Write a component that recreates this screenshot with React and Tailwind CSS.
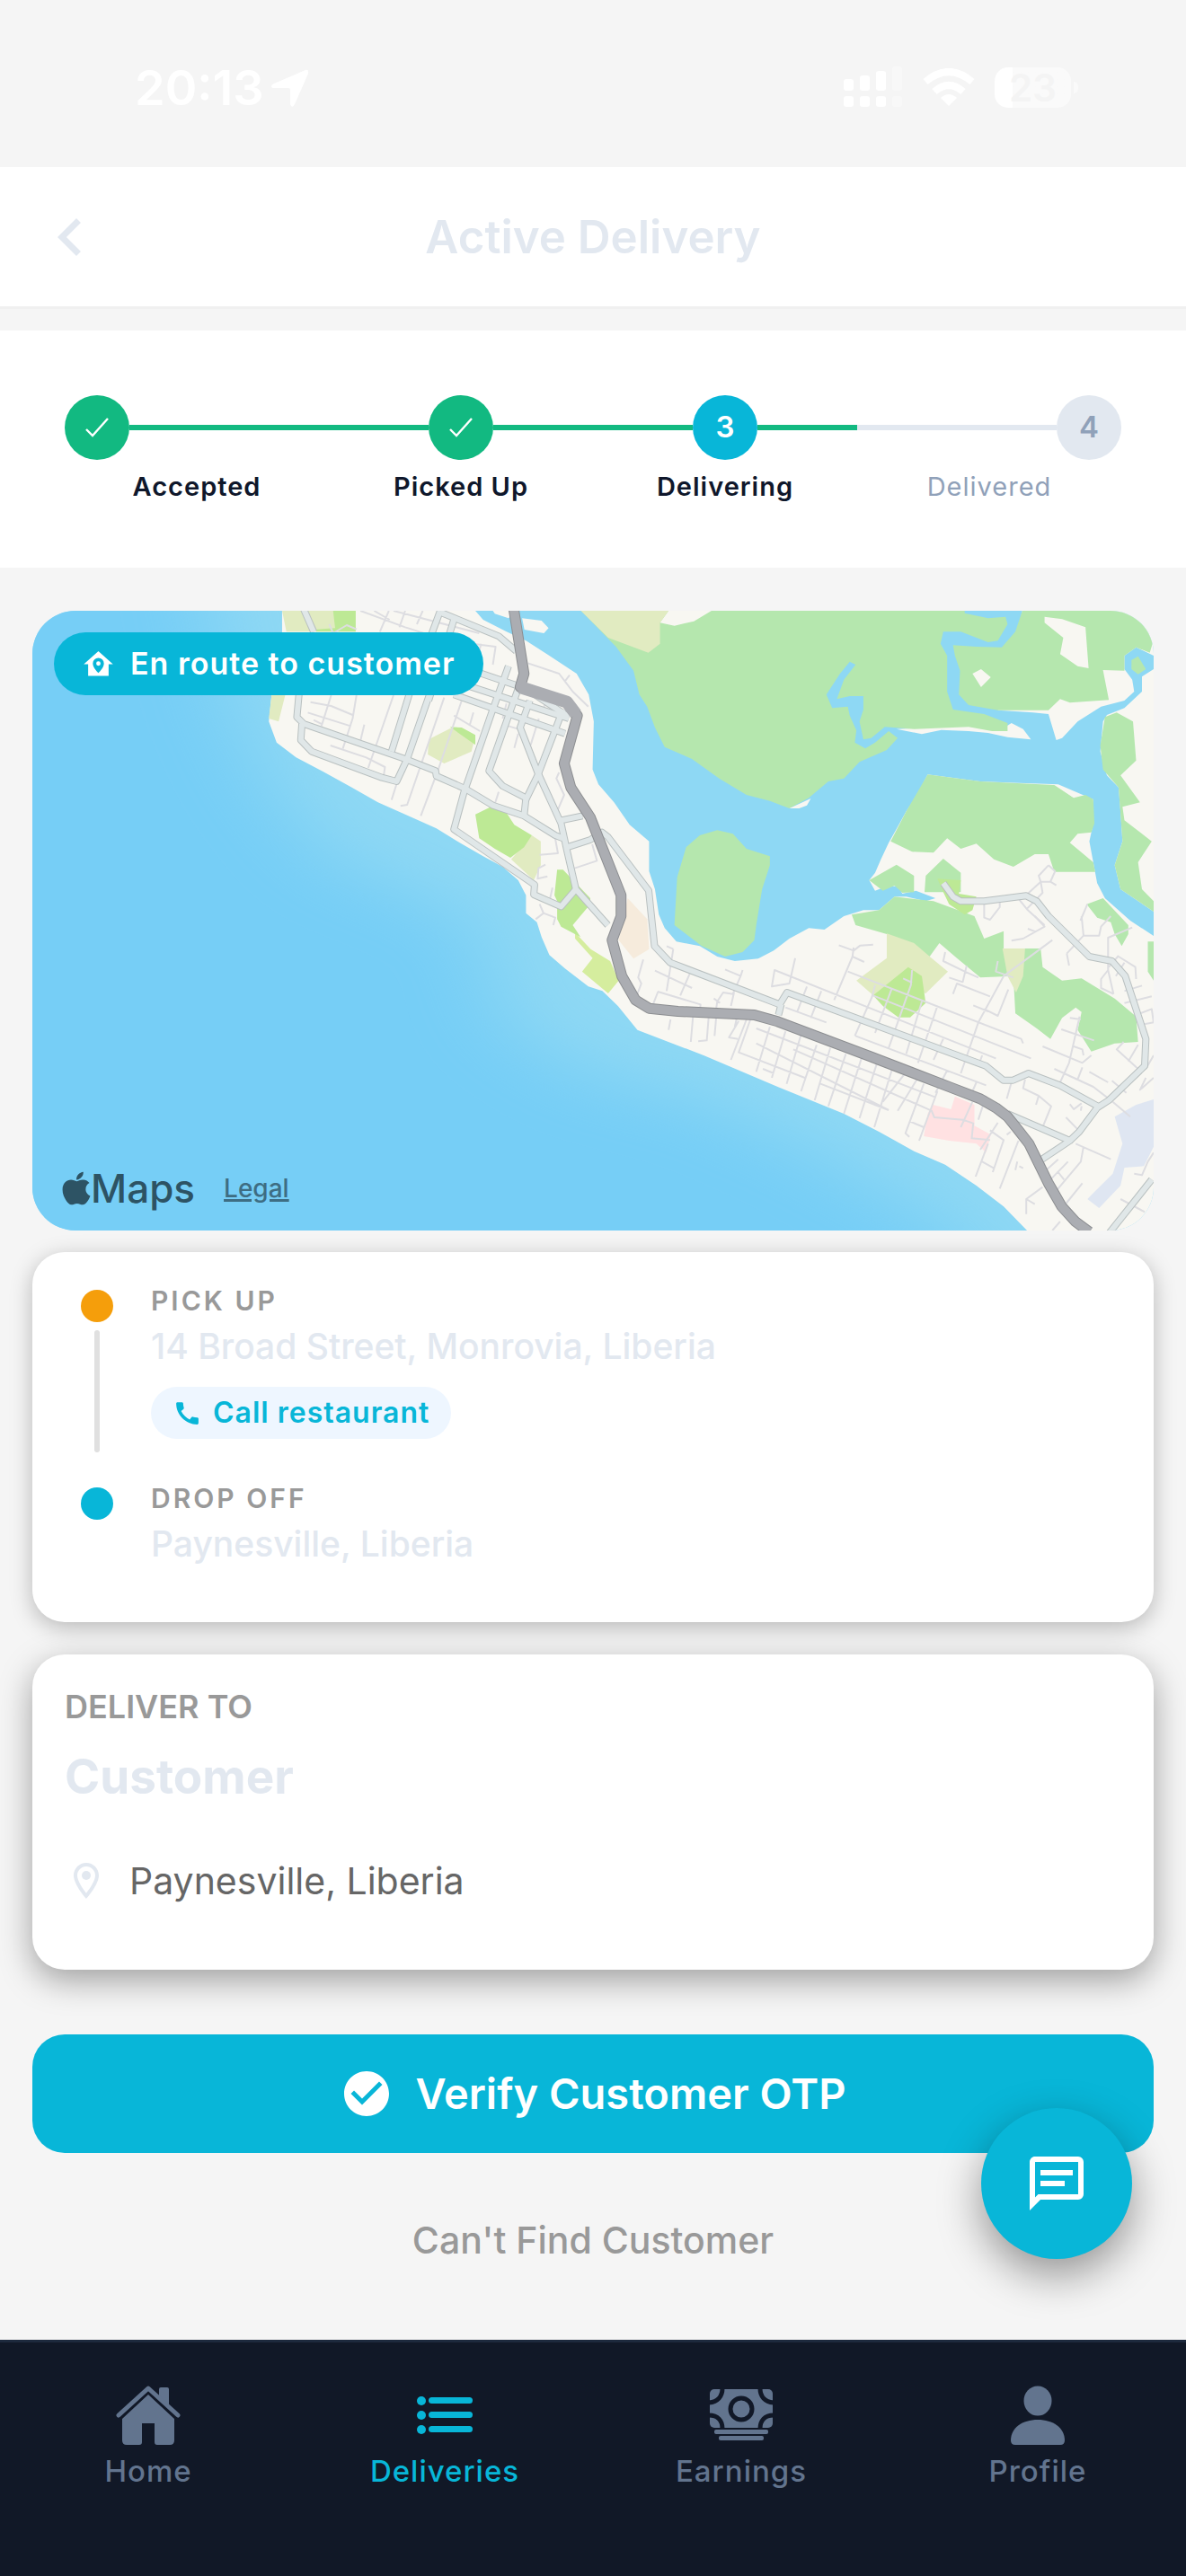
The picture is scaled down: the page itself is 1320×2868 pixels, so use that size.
import { FaApple } from "react-icons/fa";
import { MdCall, MdCheckCircle } from "react-icons/md";

const STEPS = [
    { id: 1, label: "Accepted", state: "done" },
    { id: 2, label: "Picked Up", state: "done" },
    { id: 3, label: "Delivering", state: "current" },
    { id: 4, label: "Delivered", state: "todo" },
];

const TABS = [
    { id: "home", label: "Home", Icon: HomeIcon },
    { id: "deliveries", label: "Deliveries", Icon: ListIcon },
    { id: "earnings", label: "Earnings", Icon: BanknoteIcon },
    { id: "profile", label: "Profile", Icon: PersonIcon },
];

function HomeIcon() {
    return (
        <svg viewBox="0 0 72 66" className="h-[66px] w-[72px]" fill="currentColor" aria-hidden="true">
            <path d="M48 9V4q0-2 2-2h7q2 0 2 2v20L48 12Z" />
            <path d="M3 33 36 3l33 30" fill="none" stroke="currentColor" strokeWidth="5" strokeLinecap="round" strokeLinejoin="round" />
            <path d="m36 10 29 27v24q0 5-5 5H46q-3 0-3-3V42H29v21q0 3-3 3H12q-5 0-5-5V37Z" />
        </svg>
    );
}

function ListIcon() {
    return (
        <svg viewBox="0 0 72 66" className="h-[66px] w-[72px]" fill="currentColor" aria-hidden="true">
            {[17, 33, 49].map((y) => (
                <g key={y}>
                    <circle cx="10" cy={y} r="5" />
                    <rect x="18" y={y - 4} width="49" height="7" rx="3.5" />
                </g>
            ))}
        </svg>
    );
}

function BanknoteIcon() {
    return (
        <svg viewBox="0 0 72 66" className="h-[66px] w-[72px]" fill="currentColor" aria-hidden="true">
            <rect x="1" y="4" width="70" height="43" rx="5" />
            <g fill="none" stroke="#111827" strokeWidth="5">
                <circle cx="36" cy="26" r="12" />
                <path d="M15 3c0 9-5 15-15 16M57 3c0 9 5 15 15 16M15 48c0-9-5-15-15-15M57 48c0-9 5-15 15-15" />
            </g>
            <rect x="6" y="49" width="60" height="5" rx="2" />
            <rect x="11" y="56" width="50" height="5" rx="2" />
        </svg>
    );
}

function PersonIcon() {
    return (
        <svg viewBox="0 0 72 66" className="h-[66px] w-[72px]" fill="currentColor" aria-hidden="true">
            <ellipse cx="36" cy="17" rx="15.5" ry="16.5" />
            <path d="M6 61C6 47 19 38 36 38s30 9 30 23q0 5-5 5H11q-5 0-5-5Z" />
        </svg>
    );
}

function StatusBar() {
    return (
        <div className="flex h-[186px] items-start justify-between pt-[66px] pr-[120px] pl-[150px] text-white">
            <div className="flex items-center gap-2">
                <span className="text-[54px] leading-[64px] font-semibold">20:13</span>
                <svg viewBox="0 0 42 42" className="size-[42px]" fill="currentColor" aria-hidden="true">
                    <path d="M38 1q4-1 3 4L26 39q-2 4-4 2-1-1-1-3V23q0-2-2-2H3q-3 0-3-2t3-3Z" />
                </svg>
            </div>
            <div className="flex items-center gap-[22px] pt-2">
                <svg viewBox="0 0 66 46" className="h-[46px] w-[66px]" fill="currentColor" aria-hidden="true">
                    <rect x="0" y="14" width="11" height="13" rx="3" />
                    <rect x="18" y="10" width="11" height="17" rx="3" />
                    <rect x="36" y="5" width="11" height="22" rx="3" />
                    <rect x="54" y="0" width="11" height="27" rx="3" opacity=".35" />
                    <rect x="0" y="33" width="11" height="12" rx="3" />
                    <rect x="18" y="33" width="11" height="12" rx="3" />
                    <rect x="36" y="33" width="11" height="12" rx="3" />
                    <rect x="54" y="33" width="11" height="12" rx="3" opacity=".35" />
                </svg>
                <svg viewBox="0 0 58 42" className="h-[42px] w-[58px]" aria-hidden="true">
                    <g fill="none" stroke="currentColor" strokeWidth="8">
                        <path d="M3 15q26-22 52 0" />
                        <path d="M13 26q16-14 32 0" />
                    </g>
                    <path d="M20 33q9-8 18 0l-9 9Z" fill="currentColor" />
                </svg>
                <div className="flex items-center gap-[3px]">
                    <div className="flex h-[45px] w-[85px] items-center justify-center rounded-[15px] bg-linear-to-r from-white from-24% to-[#fafafa] to-24%">
                        <span className="text-[42px] leading-[45px] font-semibold text-[#f4f4f4]">23</span>
                    </div>
                    <div className="h-[13px] w-[5px] rounded-r-full bg-[#fafafa]" />
                </div>
            </div>
        </div>
    );
}

function StepLine({ state }) {
    if (state === "none") return null;

    return <div className={`h-[6px] flex-1 ${state === "done" ? "bg-[#12b981]" : "bg-slate-200"}`} />;
}

function Step({ step, first, last }) {
    const before = first ? "none" : step.state === "todo" ? "todo" : "done";
    const after = last ? "none" : "done";

    return (
        <li className="flex-1">
            <div className="flex items-center">
                <StepLine state={before} />
                {step.state === "done" && (
                    <span className="flex size-[72px] items-center justify-center rounded-full bg-[#12b981]">
                        <svg viewBox="0 0 26 22" className="h-[22px] w-[26px]" aria-hidden="true">
                            <path d="m1 13 7 7L25 1" fill="none" stroke="#fff" strokeWidth="2.4" />
                        </svg>
                    </span>
                )}
                {step.state === "current" && (
                    <span className="flex size-[72px] items-center justify-center rounded-full bg-[#08b6d8] text-[33px] font-semibold text-white">
                        {step.id}
                    </span>
                )}
                {step.state === "todo" && (
                    <span className="flex size-[72px] items-center justify-center rounded-full bg-slate-200 text-[33px] font-semibold text-slate-400">
                        {step.id}
                    </span>
                )}
                <StepLine state={after} />
            </div>
            <p
                className={`mt-3 text-center text-[29px] leading-[36px] tracking-[1px] ${
                    step.state === "todo" ? "text-slate-400" : "font-semibold text-slate-900"
                }`}
            >
                {step.label}
            </p>
        </li>
    );
}

const STREETS = [
    "M778 20 805 100",
    "M768 300 762 385 780 408 1040 525 1118 565 1120 582 1195 625 1265 680 1345 715 1425 780 1445 790",
    "M775 408 772 462 800 500 980 587 1018 600 1045 525 1105 300",
    "M1130 30 1050 310 1005 500",
    "M1130 35 1280 115 1325 165",
    "M1165 60 1100 330",
    "M1305 215 1262 370 1190 640 1165 760 1372 945 1370 978 1440 1018 1478 960",
    "M1225 235 1350 290 1460 385",
    "M1200 280 1460 390",
    "M1165 310 1450 440",
    "M1330 290 1255 565 1290 615 1350 655 1345 715",
    "M1360 330 1335 420 1380 570 1440 740 1455 830 1478 960 1560 1080",
    "M1445 360 1380 580 1350 660",
    "M1440 730 1495 715",
    "M1455 820 1515 795 1545 770 1560 785 1665 965 1680 1150 1720 1205 2001 1345 2020 1305 2530 1550 2575 1598 2600 1598 2640 1575 2720 1615 2818 1685",
    "M2005 1345 1998 1380",
    "M2421 940 2446 985 2466 1000 2526 1000 2634 982 2661 1000 2691 1050 2796 1185 2854 1200 2888 1250 2941 1460 2938 1550 2846 1665 2816 1690 2770 1770 2746 1800 2671 1865",
    "M2586 1710 2746 1800",
    "M2956 1930 2846 2110",
];

const HIGHWAY =
    "M1318 20 1345 240 1335 285 1455 335 1482 380 1448 540 1465 620 1515 720 1594 980 1594 1050 1571 1130 1596 1250 1631 1330 1666 1358 1740 1368 1936 1380 1996 1402 2236 1520 2436 1620 2516 1660 2556 1690 2586 1720 2611 1760 2641 1810 2690 1940 2725 2020 2760 2070 2796 2105";

const LANES_WEST =
    "M925 30 1040 85 1150 130 1272 150 1265 210M998 30 975 100M1040 30 1025 85M1085 30 1070 75M1010 30 1230 105M960 30 1000 60M1235 140 1222 200M845 75 855 105 890 78 915 92M1355 205 1435 240 1470 300 1510 350M1462 245 1450 265M850 312 825 415M915 312 905 390 880 490M1010 312 945 555M797 335 850 348 905 378M790 370 900 415M805 395 828 410M935 410 925 465M848 480 940 520 988 552 985 580M1020 600 1005 662M1140 320 1045 678 1028 682M1185 330 1125 560 1080 715M1165 380 1232 432M1215 370 1205 415M1383 390 1362 478M1330 440 1320 488M1280 635 1270 675M1435 570 1428 590 1448 645 1430 700M1425 790 1432 840 1385 845M1475 890 1532 865 1520 810M1400 878 1382 890 1380 925 1405 917M1418 955 1412 990M1375 1060 1395 1040 1425 1055 1420 1080M1395 1040 1385 1010M1300 340 1290 390M1400 330 1395 360M1305 415 1330 425";

// Everything east of the centre line, y measured from the middle of the map
const LANES_EAST =
    "M500 370 465 520M540 385 505 540M580 395 543 560M620 430 580 585M655 440 615 615M695 460 650 635M735 475 690 660M775 490 730 675M815 505 768 705M850 520 790 620M880 540 828 650M930 585 883 750M895 560 848 725 858 737M465 375 925 605M465 425 805 648M440 345 400 480M420 350 395 405 418 410M450 345 420 455 590 540M630 560 805 648M482 510 510 525M540 305 645 355M560 445 915 650 922 672 995 680 1022 692 1018 742 1065 748M1065 715 1100 748 1072 855M1060 760 1028 870M1045 820 1075 842M858 685 895 705M1020 620 990 705M1055 600 1035 680M565 140 550 225 505 235 512 180 1080 475M595 235 570 320M632 250 605 340M715 105 712 135 665 280M677 97 715 115 732 98 765 95M712 135 742 153M700 185 1145 410 1150 425M765 265 1170 475M770 230 762 270 718 400M812 245 770 390M865 180 862 230 805 440M842 208 865 222M890 285 850 460M930 300 880 490M720 400 1055 565M945 410 920 480M1225 80 1100 200 1035 355 990 525M1050 310 1085 333 1112 245M1022 298 1060 318M950 120 945 150 1000 185 1035 205M1005 165 995 220 960 205M970 260 980 225 1065 268M1085 150 1080 185 1125 205M1045 465 1035 500M955 515 925 590M1030 555 1015 600M1120 555 1108 610M1155 545 1150 575 1190 600 1222 635 1200 705M1190 600 1183 630M1200 435 1302 490 1325 465M1230 510 1330 570 1370 610M1295 335 1268 490 1245 555M1270 340 1298 345M1248 378 1332 415M1280 435 1302 445 1305 465M1302 505 1290 545M1320 520 1368 555M1378 550 1415 590M1408 420 1390 445 1445 510M1445 430 1420 485M1465 540 1450 580 1485 540M1485 465 1465 510M1300 0 1305 65 1345 65 1350 35 1375 0M1430 38 1368 72 1368 180 1350 210 1350 240 1382 260M1368 180 1382 260M1395 135 1438 170 1440 210M1370 170 1395 132M1410 155 1388 200M1410 250 1455 232M1410 290 1480 268M1450 325 1480 310 1485 355 1455 362M1262 125 1268 165M1262 125 1305 65M1180 0 1205 35 1150 75 1120 82M1162 42 1182 52M1260 672 1290 712M1270 628 1280 645 1300 625M1300 635 1298 650M1380 620 1425 670M1285 760 1375 812M1305 770 1298 820 1230 925M1265 820 1220 880M1240 812 1195 865M1238 852 1255 880M1302 892 1260 960M1200 905 1158 945 1158 995M1158 945 1180 962M1085 690 1040 780M1138 750 1090 910M1118 720 1108 730M1135 820 1130 848M1140 835 1150 842M1485 790 1470 820 1455 865 1435 860M1400 945 1462 988M1245 1020 1225 1050M245 345 240 380M303 330 297 420M343 335 338 415 316 418M362 340 358 400M415 340 410 370M175 145 162 205 170 225 160 260M205 182 300 240M252 110 235 250M295 190 270 265M212 252 322 295 320 318M213 252 200 295M235 100 252 110M385 178 425 200 430 180M425 200 405 260 380 255 365 285 362 310M408 255 400 300M356 275 372 290";

const LANES_NORTH_EAST =
    "M1215-170 1190-135 1195-115 1162-75M1215-170 1232-150 1220-115 1195-115 1200-78 1160-25M1220-115 1235-103M1050-40V5L1065 12 1090-30V-45M1140-55 1162-20 1205 30M1315-40 1297 15";

function DeliveryMap() {
    return (
        <svg viewBox="83 30 2878 2070" preserveAspectRatio="none" className="block h-[690px] w-full" role="img" aria-label="Route map">
            <defs>
                <filter id="depth" x="-20%" y="-20%" width="140%" height="140%">
                    <feGaussianBlur stdDeviation="110" />
                </filter>
            </defs>
            <rect x="83" y="30" width="2878" height="2070" fill="#8ed8f4" />
            <path
                d="M-400-400H480L580 300 680 600 840 860 1100 990 1240 1100 1280 1400 1500 1580 1780 1660 2060 1820 2450 2100 2700 2600H-400Z"
                fill="#76cef6"
                filter="url(#depth)"
            />

            <g fill="#f8f7f2">
                <path d="M724 30V100L697 312 690 400 710 470 760 520 830 568 900 618 970 670 1040 710 1120 757 1180 805 1240 850 1290 885 1330 930 1350 980 1350 1040 1378 1070 1390 1120 1410 1180 1450 1225 1510 1285 1546 1300 1586 1350 1636 1430 1806 1515 1996 1620 2166 1710 2256 1770 2346 1835 2426 1880 2506 1950 2576 2020 2636 2100H2961V1116L2901 1065 2836 990 2816 940 2806 870 2796 800 2806 740 2806 660 2716 610 2616 605 2516 600 2381 577 2356 640 2326 700 2296 770 2281 805 2261 860 2246 905 2231 930 2246 965 2276 950 2306 950 2316 975 2351 965 2401 990 2376 1000 2326 985 2296 985 2256 1030 2216 1030 2166 1050 2116 1095 2076 1090 2026 1125 1986 1165 1946 1192 1886 1200 1841 1185 1796 1150 1736 1135 1706 1090 1691 1045 1681 960 1666 900 1666 800 1616 745 1576 670 1536 610 1521 560 1524 400 1511 310 1480 240 1410 180 1350 130 1300 100 1240 60 1220 30Z" />
                <path d="M1265 30h60l-20 25-35-15ZM1340 55l50 8 18 25-12 17-50-12Z" />
            </g>

            <g transform="translate(1476 0)">
                <path d="M825 425 1010 415 1090 430 1120 405 1150 425 1170 460 1110 452 1060 438 1010 432 940 428 890 442ZM1148 30 1085 362 1175 370 1215 375 1235 462 1250 455 1290 400 1350 350 1410 330 1435 300 1430 260 1410 225 1410 180 1440 152 1485 180V30ZM1485 225 1455 250 1455 300 1410 355 1365 378 1355 400 1348 500 1365 580 1395 620 1400 700 1405 800 1385 880 1400 960 1485 1035Z" fill="#f8f7f2" />
                <g fill="#b5e7ae">
                    <path d="M15 30 60 90 105 150 150 230 165 310 185 350 205 420 230 485 300 525 370 590 440 645 500 665 550 690 600 655 650 600 690 590 730 535 800 495 828 455 805 432 770 470 745 490 718 470 722 430 705 380 700 350 660 355 645 310 680 240 705 200 720 210 690 260 672 325 705 315 740 315 740 360 730 400 740 460 760 455 795 418 870 425 1010 418 1070 432 1110 432 1110 405 1050 375 970 360 955 300 955 180 938 140 945 100 990 100 1060 135 1085 130 1110 75 1105 50 1060 55 1000 38V30Z" />
                    <path d="M1148 30 1130 100 1095 152 1030 150 970 145 975 180 988 230 985 310 1010 345 1085 362H1215L1245 325 1270 337 1370 328 1355 228 1410 230V180L1440 152 1475 170 1482 140V30Z" />
                    <path d="M1428 195 1445 182 1465 225 1445 242 1428 225Z" />
                    <path d="M1360 385 1390 370 1432 400 1440 530 1400 580 1450 670 1405 685 1410 730 1480 800 1445 870 1455 960 1485 1000V1035L1400 960 1385 880 1405 800 1395 620 1355 560 1348 480Z" />
                    <path d="M905 577 1040 600 1230 612 1280 655 1310 645 1330 660 1333 740 1325 770 1290 775 1270 805 1330 870 1335 902H1230L1215 843H1180L1125 885 1075 860 1030 808 990 825 955 790 920 838 865 835 810 800 850 700Z" />
                    <path d="M755 930 825 878 870 915V970L840 972 820 948 790 965ZM897 970 900 915 945 858 990 905V970Z" />
                    <path d="M710 1045 780 1030 820 985 920 1000 1025 1050 1050 1125 1100 1100V1158H1195L1200 1220 1250 1265 1300 1258 1385 1325 1440 1385 1445 1470 1385 1475 1325 1502 1290 1430 1300 1370 1285 1355 1250 1390 1220 1460 1185 1425 1130 1375 1125 1250 1040 1255 980 1190 935 1140 910 1185 800 1110 720 1080Z" />
                    <path d="M255 1080 262 920 285 820 320 780 365 763 405 775 440 825 500 850V880L480 960 465 1080 460 1130 430 1170 385 1185 360 1170 325 1150Z" />
                    <path d="M1313 1010 1355 990 1420 1080V1110L1403 1150 1385 1110 1375 1070 1340 1055ZM1470 1135h15v130l-15-30Z" />
                </g>
                <g fill="#f8f7f2">
                    <path d="M240 30H350L305 65 255 80 218 70ZM1205 50 1250 58 1310 85 1318 222 1290 215 1245 175 1253 120 1205 70ZM1020 240 1042 225 1067 252 1042 285ZM550 690 605 657 595 680 575 690ZM1235 615 1290 640 1280 655Z" />
                </g>
                <g fill="#e1ebc1">
                    <path d="M15 30H240L218 70V140L188 170 85 120ZM722 1265 800 1190V1108L870 1140 915 1190 957 1235 900 1308 860 1290 770 1320ZM1097 1158H1155L1150 1250 1132 1305 1110 1250Z" />
                </g>
                <g fill="#bde995">
                    <path d="M765 1315 855 1220 890 1250 900 1340 860 1388H830L790 1350ZM930 925 990 930 985 975 1030 985 1020 1030 1000 1045 960 1010 945 970Z" />
                </g>
                <path d="M918 1680 965 1695 975 1652 1025 1680V1750L1067 1780 1055 1840 1030 1810 960 1800 895 1785 905 1710Z" fill="#ffe1e2" />
                <path d="M1485 1662 1440 1680 1385 1720 1405 1810 1380 1910 1330 1975 1315 1995 1345 2025 1400 1950 1410 1890 1460 1885 1485 1820Z" fill="#dfe6f2" />
                <path d="M135 990 185 1060 190 1160 150 1192 112 1130Z" fill="#f6ebdc" />
                <path d="M0 1105 40 1160 90 1200 112 1265 85 1308 18 1235 45 1190 0 1125Z" fill="#d5ed9e" />
            </g>

            <path d="M724 30H860V90L812 100H735ZM697 312H732L715 400 690 390ZM1100 460 1160 420 1220 450 1210 500 1140 540 1098 510ZM1365 780 1388 800V880L1370 930 1312 860Z" fill="#e1ebc1" />
            <path d="M855 30H913V100H812V92L860 88ZM1155 418 1185 420 1220 445V478ZM1220 710 1260 685 1300 705 1320 745 1365 780 1345 820 1310 855 1270 825 1230 790ZM1430 895H1445L1515 990V1010L1470 1080 1490 1120 1440 1085 1430 1060V1000L1423 980Z" fill="#bde995" />

            <g fill="none" strokeLinejoin="round">
                <path d={LANES_WEST} stroke="#dddde1" strokeWidth="2" vectorEffect="non-scaling-stroke" />
                <g transform="translate(1476 1050)" stroke="#dddde1" strokeWidth="2">
                    <path d={LANES_EAST} vectorEffect="non-scaling-stroke" />
                    <path d={LANES_NORTH_EAST} vectorEffect="non-scaling-stroke" />
                </g>
                {STREETS.map((d) => (
                    <path key={d} d={d} stroke="#b9c0c0" strokeWidth="8" vectorEffect="non-scaling-stroke" />
                ))}
                {STREETS.map((d) => (
                    <path key={d} d={d} stroke="#e0e7e8" strokeWidth="6" vectorEffect="non-scaling-stroke" />
                ))}
                <path d={HIGHWAY} stroke="#8c8e91" strokeWidth="12" vectorEffect="non-scaling-stroke" />
                <path d={HIGHWAY} stroke="#abadb2" strokeWidth="10" vectorEffect="non-scaling-stroke" />
                <path d="M1335 285 1455 335 1478 375" stroke="#abadb2" strokeWidth="14" vectorEffect="non-scaling-stroke" />
            </g>
        </svg>
    );
}

export default function App() {
    return (
        <div className="flex min-h-screen flex-col bg-[#f5f5f5] font-[Inter,sans-serif]">
            <StatusBar />

            <header className="flex items-center border-b-[3px] border-[#f0f0f0] bg-white px-9 pt-9 pb-[35px] text-slate-200">
                <button type="button" aria-label="Back" className="flex-none">
                    <svg viewBox="0 0 24 24" className="size-[84px]" fill="currentColor" aria-hidden="true">
                        <path d="M15.41 16.58 10.83 12l4.58-4.59L14 6l-6 6 6 6Z" />
                    </svg>
                </button>
                <h1 className="flex-1 pr-[84px] text-center text-[51px] leading-[84px] font-semibold">Active Delivery</h1>
            </header>

            <section className="mt-6 bg-white p-[72px]">
                <ol className="flex">
                    {STEPS.map((step, i) => (
                        <Step key={step.id} step={step} first={i === 0} last={i === STEPS.length - 1} />
                    ))}
                </ol>
            </section>

            <main className="relative flex-1 px-9 pt-12 pb-[51px]">
                <section className="relative overflow-hidden rounded-[48px]">
                    <DeliveryMap />
                    <div className="absolute top-6 left-6 flex items-center gap-4 rounded-full bg-[#08b6d8] py-[15px] pr-8 pl-[30px] text-white">
                        <svg viewBox="0 0 24 24" className="size-[39px]" fill="currentColor" aria-hidden="true">
                            <path
                                fillRule="evenodd"
                                d="M12 3 2 12h3v8h14v-8h3L12 3Zm0 4.7a3.8 3.8 0 0 1 3.8 3.8C15.8 14.5 12 18 12 18s-3.8-3.5-3.8-6.5A3.8 3.8 0 0 1 12 7.7Zm0 2.3a1.5 1.5 0 1 0 0 3 1.5 1.5 0 0 0 0-3Z"
                            />
                        </svg>
                        <span className="text-[34px] leading-[40px] font-semibold tracking-[1px]">En route to customer</span>
                    </div>
                    <div className="absolute bottom-5 left-[33px] flex items-center text-[#2d5364]">
                        <FaApple className="h-[42px] w-[32px]" aria-hidden="true" />
                        <span className="text-[44px] leading-[54px] font-medium">Maps</span>
                        <a href="#legal" className="ml-8 text-[28px] leading-[54px] font-medium text-[#3e6d83] underline decoration-[3px]">
                            Legal
                        </a>
                    </div>
                </section>

                <section className="mt-6 rounded-[36px] bg-white px-9 pt-9 pb-[63px] shadow-[0_6px_24px_rgba(0,0,0,0.25)]">
                    <div className="flex gap-6">
                        <div className="flex w-[72px] flex-col items-center pt-[6px] pb-[33px]">
                            <span className="size-9 rounded-full bg-[#f59e0b]" />
                            <span className="mt-[9px] w-[6px] flex-1 rounded-full bg-[#e0e0e0]" />
                        </div>
                        <div className="flex-1 pb-12">
                            <h2 className="text-[30px] leading-[36px] font-semibold tracking-[3px] text-[#999]">PICK UP</h2>
                            <p className="mt-[9px] text-[39px] leading-[48px] font-medium text-slate-200">14 Broad Street, Monrovia, Liberia</p>
                            <button
                                type="button"
                                className="mt-[21px] flex items-center gap-3 rounded-full bg-[#eef6ff] py-[9px] pr-6 pl-6 text-[#08b6d8]"
                            >
                                <MdCall className="size-[33px]" aria-hidden="true" />
                                <span className="text-[32px] leading-[40px] font-semibold tracking-[1px]">Call restaurant</span>
                            </button>
                        </div>
                    </div>
                    <div className="flex gap-6">
                        <div className="flex w-[72px] justify-center pt-[6px]">
                            <span className="size-9 rounded-full bg-[#08b6d8]" />
                        </div>
                        <div className="flex-1">
                            <h2 className="text-[30px] leading-[36px] font-semibold tracking-[3px] text-[#999]">DROP OFF</h2>
                            <p className="mt-[9px] text-[39px] leading-[48px] font-medium text-slate-200">Paynesville, Liberia</p>
                        </div>
                    </div>
                </section>

                <section className="mt-9 rounded-[36px] bg-white px-9 pt-9 pb-[75px] shadow-[0_12px_36px_rgba(0,0,0,0.35)]">
                    <h2 className="text-[36px] leading-[44px] font-semibold text-[#999]">DELIVER TO</h2>
                    <p className="mt-6 text-[53px] leading-[64px] font-bold text-slate-200">Customer</p>
                    <div className="mt-[60px] flex items-center gap-6">
                        <svg viewBox="0 0 24 24" className="size-12 text-slate-200" fill="currentColor" aria-hidden="true">
                            <path
                                fillRule="evenodd"
                                d="M12 2C8.13 2 5 5.13 5 9c0 5.25 7 13 7 13s7-7.75 7-13c0-3.87-3.13-7-7-7ZM7 9c0-2.76 2.24-5 5-5s5 2.24 5 5c0 2.88-2.88 7.19-5 9.88C9.92 16.21 7 11.85 7 9Z"
                            />
                            <circle cx="12" cy="9" r="2.5" />
                        </svg>
                        <span className="text-[41px] leading-[48px] text-[#666]">Paynesville, Liberia</span>
                    </div>
                </section>

                <button
                    type="button"
                    className="mt-[72px] flex h-[132px] w-full items-center justify-center gap-6 rounded-[36px] bg-[#08b6d8] text-white"
                >
                    <MdCheckCircle className="size-[60px]" aria-hidden="true" />
                    <span className="text-[47px] leading-[60px] font-semibold">Verify Customer OTP</span>
                </button>

                <button type="button" className="mt-10 block w-full py-[27px] text-center text-[41px] leading-[60px] font-medium text-[#999]">
                    Can't Find Customer
                </button>

                <button
                    type="button"
                    aria-label="Chat"
                    className="absolute right-[60px] bottom-[90px] flex size-[168px] items-center justify-center rounded-full bg-[#08b6d8] text-white shadow-[0_18px_48px_rgba(0,0,0,0.4)]"
                >
                    <svg viewBox="0 0 24 24" className="size-[72px]" fill="currentColor" aria-hidden="true">
                        <path d="M20 2a2 2 0 0 1 2 2v12a2 2 0 0 1-2 2H6l-4 4V4c0-1.11.9-2 2-2h16M4 4v13.17L5.17 16H20V4H4m2 3h12v2H6V7m0 4h9v2H6v-2Z" />
                    </svg>
                </button>
            </main>

            <nav className="flex border-t-[3px] border-slate-800 bg-[#111827] pt-12 pb-24">
                {TABS.map(({ id, label, Icon }) => (
                    <a
                        key={id}
                        href={`#${id}`}
                        className={`flex flex-1 flex-col items-center ${id === "deliveries" ? "text-[#08b6d8]" : "text-slate-500"}`}
                    >
                        <Icon />
                        <span className="mt-2 text-[33px] leading-[42px] font-medium tracking-[1px]">{label}</span>
                    </a>
                ))}
            </nav>
        </div>
    );
}
